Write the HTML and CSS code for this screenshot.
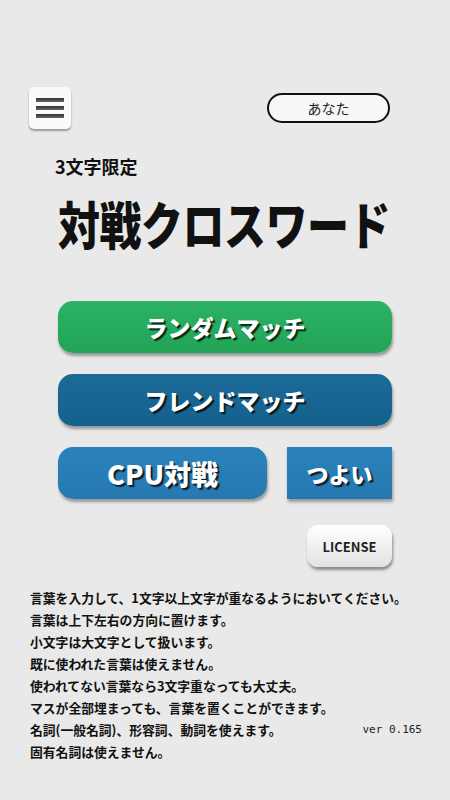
FILE: index.html
```html
<!DOCTYPE html>
<html lang="ja">
<head>
<meta charset="utf-8">
<link rel="stylesheet" href="styles.css">
</head>
<body>
<div class="page">
  <header class="topbar">
    <button class="menu-btn" aria-label="menu">
      <span class="bar"></span><span class="bar"></span><span class="bar"></span>
    </button>
    <div class="name-pill">あなた</div>
  </header>

  <div class="subtitle">3文字限定</div>
  <h1 class="title">対戦クロスワード</h1>

  <div class="buttons">
    <button class="btn btn-green">ランダムマッチ</button>
    <button class="btn btn-navy">フレンドマッチ</button>
    <div class="cpu-row">
      <button class="btn btn-blue btn-cpu">CPU対戦</button>
      <button class="btn btn-blue btn-level">つよい</button>
    </div>
  </div>

  <div class="license-row">
    <button class="license-btn">LICENSE</button>
  </div>

  <div class="rules">
    <p>言葉を入力して、1文字以上文字が重なるようにおいてください。</p>
    <p>言葉は上下左右の方向に置けます。</p>
    <p>小文字は大文字として扱います。</p>
    <p>既に使われた言葉は使えません。</p>
    <p>使われてない言葉なら3文字重なっても大丈夫。</p>
    <p>マスが全部埋まっても、言葉を置くことができます。</p>
    <p class="with-ver"><span>名詞(一般名詞)、形容詞、動詞を使えます。</span><span class="ver">ver 0.165</span></p>
    <p>固有名詞は使えません。</p>
  </div>
</div>
</body>
</html>
```

FILE: styles.css
```css
* { box-sizing: border-box; }
html, body {
  margin: 0;
  padding: 0;
  background: #e9e9e9;
}
body {
  font-family: "Noto Sans CJK JP", "Noto Sans", sans-serif;
  color: #111;
  width: 450px;
  height: 800px;
  overflow: hidden;
}
.page {
  padding-top: 87px;
}
.topbar {
  display: flex;
  justify-content: space-between;
  align-items: center;
  padding: 0 60px 0 29px;
  height: 42px;
}
.menu-btn {
  width: 42px;
  height: 42px;
  border: none;
  border-radius: 5px;
  background: #fafafa;
  box-shadow: 0 2px 2px rgba(0,0,0,0.35);
  display: flex;
  flex-direction: column;
  align-items: center;
  justify-content: center;
  gap: 4px;
  padding: 0;
}
.menu-btn .bar {
  display: block;
  width: 28px;
  height: 4px;
  background: linear-gradient(#333, #666);
}
.name-pill {
  width: 123px;
  height: 30px;
  border: 2px solid #111;
  border-radius: 15px;
  background: #f7f7f7;
  font-size: 14px;
  line-height: 26px;
  text-align: center;
  color: #222;
}
.subtitle {
  margin: 25px 0 0 55px;
  font-size: 18px;
  font-weight: 700;
  line-height: 24px;
  color: #111;
}
.title {
  margin: 19px 0 0 58px;
  font-size: 42px;
  font-weight: 900;
  line-height: 52px;
  letter-spacing: -0.5px;
  transform: scaleY(1.22);
  transform-origin: left center;
  color: #111;
  white-space: nowrap;
}
.buttons {
  margin: 52px 58px 0 58px;
  display: flex;
  flex-direction: column;
  gap: 21px;
}
.btn {
  height: 52px;
  border: none;
  border-radius: 15px;
  color: #fff;
  font-family: "Noto Sans CJK JP", sans-serif;
  font-weight: 900;
  font-size: 23px;
  text-shadow: 2px 2px 1px rgba(0,0,0,0.75);
  box-shadow: 1px 3px 3px rgba(0,0,0,0.35);
  padding: 0;
  width: 100%;
}
.btn-green { background: linear-gradient(#2bb265, #23a457); }
.btn-navy { background: linear-gradient(#1c6a98, #15618d); }
.btn-blue { background: linear-gradient(#2b82bb, #2678b0); }
.cpu-row {
  display: flex;
  gap: 20px;
}
.btn-cpu {
  flex: 0 0 209px;
  font-size: 27px;
}
.btn-level {
  flex: 1;
  border-radius: 0;
  font-size: 22px;
}
.license-row {
  display: flex;
  justify-content: flex-end;
  padding-right: 58px;
  margin-top: 26px;
}
.license-btn {
  width: 85px;
  height: 42px;
  border: none;
  border-radius: 11px;
  background: linear-gradient(#ffffff, #e2e2e2);
  box-shadow: 1px 3px 3px rgba(0,0,0,0.4);
  font-family: "Noto Sans CJK JP", sans-serif;
  font-weight: 700;
  font-size: 13px;
  color: #222;
  padding: 0;
}
.rules {
  margin-top: 20px;
  padding: 0 28px 0 30px;
}
.rules p {
  margin: 0;
  font-size: 12.8px;
  line-height: 22px;
  font-weight: 700;
  color: #111;
  white-space: nowrap;
}
.rules .with-ver {
  display: flex;
  justify-content: space-between;
}
.ver {
  font-family: "DejaVu Sans Mono", "Liberation Mono", monospace;
  font-weight: 400;
  font-size: 11px;
  color: #222;
}
```
